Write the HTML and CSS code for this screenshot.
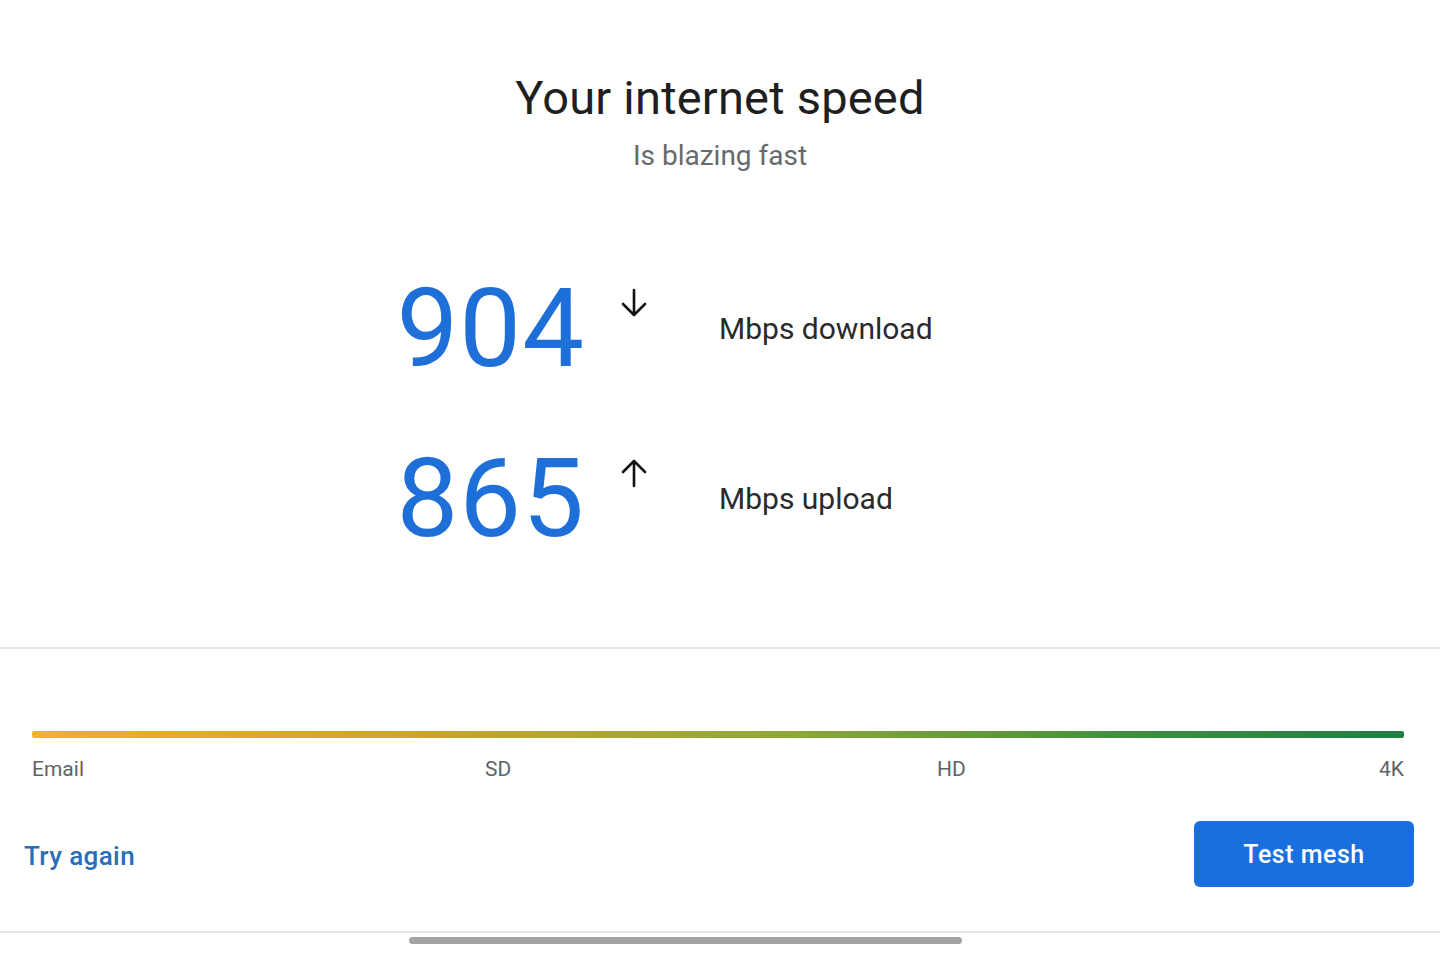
FILE: index.html
```html
<!DOCTYPE html>
<html lang="en">
<head>
<meta charset="utf-8">
<title>Your internet speed</title>
<link rel="stylesheet" href="styles.css">
</head>
<body>
<main class="screen">
  <section class="result">
    <header class="heading">
      <h1 class="title">Your internet speed</h1>
      <p class="subtitle">Is blazing fast</p>
    </header>
    <div class="stats">
      <div class="stat-value">904</div>
      <div class="stat-icon">
        <svg viewBox="0 0 28 30" width="28" height="30" aria-hidden="true"><path d="M14 2 V27 M3 16 L14 27 L25 16" fill="none" stroke="#111" stroke-width="2.6" stroke-linecap="round" stroke-linejoin="round"/></svg>
      </div>
      <div class="stat-label">Mbps download</div>
      <div class="stat-value">865</div>
      <div class="stat-icon">
        <svg viewBox="0 0 28 30" width="28" height="30" aria-hidden="true"><path d="M14 28 V3 M3 14 L14 3 L25 14" fill="none" stroke="#111" stroke-width="2.6" stroke-linecap="round" stroke-linejoin="round"/></svg>
      </div>
      <div class="stat-label">Mbps upload</div>
    </div>
  </section>
  <section class="quality">
    <div class="scale-bar"></div>
    <div class="scale-labels">
      <span>Email</span>
      <span>SD</span>
      <span>HD</span>
      <span class="last">4K</span>
    </div>
    <div class="actions">
      <a class="link-btn" href="#">Try again</a>
      <button class="primary-btn" type="button">Test mesh</button>
    </div>
  </section>
  <footer class="nav-area">
    <div class="home-indicator"></div>
  </footer>
</main>
</body>
</html>
```

FILE: styles.css
```css
* { box-sizing: border-box; }
html, body { margin: 0; padding: 0; background: #fff; }
body {
  font-family: Roboto, "Noto Sans", "Liberation Sans", sans-serif;
  color: #202124;
  width: 1440px;
  height: 960px;
  overflow: hidden;
}
.screen { display: flex; flex-direction: column; height: 960px; }

.result {
  height: 649px;
  border-bottom: 2px solid #e3e3e3;
  padding-top: 68px;
}
.heading { text-align: center; }
.title {
  margin: 0;
  font-size: 47px;
  font-weight: 400;
  line-height: 60px;
  color: #1f1f1f;
  letter-spacing: 0.2px;
}
.subtitle {
  margin: 8px 0 0 0;
  font-size: 28px;
  line-height: 40px;
  color: #666a6e;
}

.stats {
  display: grid;
  grid-template-columns: 584px 28px 1fr;
  column-gap: 0;
  row-gap: 12px;
  margin-top: 78px;
}
.stat-value {
  text-align: right;
  font-size: 110px;
  line-height: 150px;
  color: #1f6fd8;
  letter-spacing: 1px;
  margin-right: -1px;
}
.stat-icon {
  margin-left: 36px;
  padding-top: 34px;
}
.stat-icon svg { display: block; }
.stat-label {
  margin-left: 107px;
  font-size: 30px;
  line-height: 150px;
  padding-bottom: 8px;
  color: #2a2a2a;
}

.quality { padding: 82px 36px 0 32px; border-bottom: 2px solid #e6e6e6; height: 284px; flex: none; }
.scale-bar {
  height: 7px;
  border-radius: 2px;
  background: linear-gradient(90deg, #f0b323 0%, #c9a42a 30%, #8ea83a 55%, #3f8f3e 80%, #1e7f43 100%);
}
.scale-labels {
  display: grid;
  grid-template-columns: 453px 452px 1fr auto;
  margin-top: 17px;
  font-size: 21px;
  line-height: 28px;
  color: #5f6368;
}
.actions {
  display: flex;
  justify-content: space-between;
  align-items: center;
  margin-top: 38px;
  margin-left: -8px;
  margin-right: -10px;
}
.link-btn {
  color: #2a6db8;
  text-decoration: none;
  font-size: 26px;
  font-weight: 500;
  letter-spacing: 0.4px;
  margin-top: 4px;
}
.primary-btn {
  width: 220px;
  height: 66px;
  border: none;
  border-radius: 6px;
  background: #1a6fdf;
  color: #fff;
  font-family: inherit;
  font-size: 25px;
  font-weight: 500;
  letter-spacing: 0.5px;
}

.nav-area { flex: 1; display: flex; justify-content: center; padding-top: 4px; padding-right: 40px; }
.home-indicator {
  width: 553px;
  height: 7px;
  border-radius: 4px;
  background: #a3a3a3;
  margin-left: -30px;
}
```
